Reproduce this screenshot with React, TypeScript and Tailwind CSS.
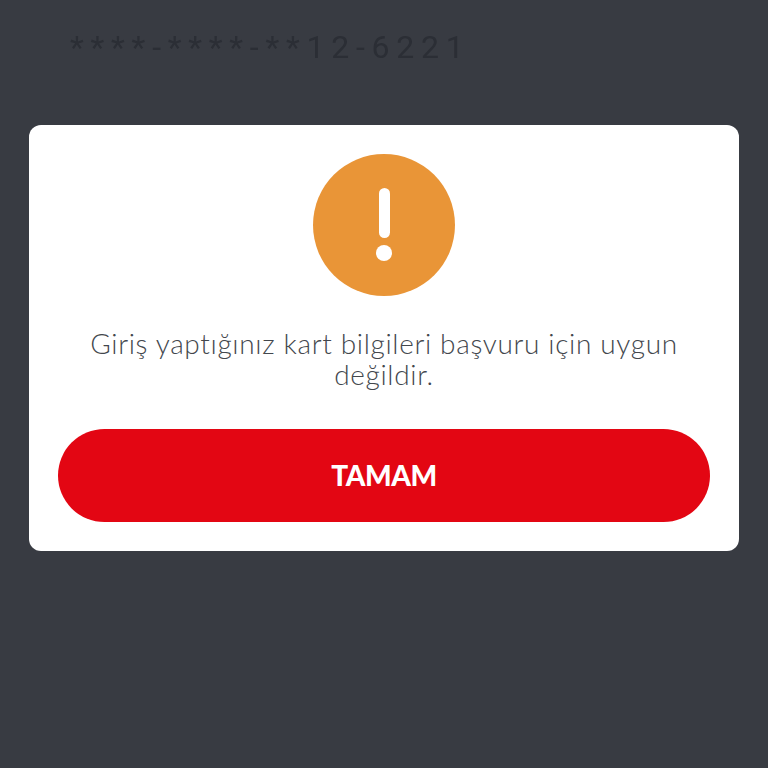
import React from 'react';

const App = () => {
    return (
        <div className="w-[768px] h-[768px] overflow-hidden bg-[#383b42] font-['Lato',sans-serif]">
            <div className="h-[125px] pl-[70px] pt-[28px]">
                <div className="text-[32px] leading-[38px] tracking-[6.75px] text-[#2b2e35] blur-[0.7px] font-['Roboto',sans-serif]">
                    ****-****-**12-6221
                </div>
            </div>
            <div className="mx-[29px] h-[426px] rounded-[12px] bg-white pt-[29px] px-[29px] flex flex-col items-center">
                <div className="w-[142px] h-[142px] rounded-full bg-[#e99537] flex flex-col items-center shrink-0">
                    <div className="w-[11px] h-[50px] mt-[34px] rounded-full bg-white"></div>
                    <div className="w-[16px] h-[16px] mt-[7px] rounded-full bg-white"></div>
                </div>
                <p className="mt-[32px] text-center text-[28px] leading-[31px] font-light tracking-[0.65px] text-[#43474d] w-[640px]">
                    Giriş yaptığınız kart bilgileri başvuru için uygun değildir.
                </p>
                <button className="mt-[39px] w-full h-[93px] shrink-0 rounded-full bg-[#e30613] text-white text-[28px] font-black tracking-[-0.4px] pb-[2px]">
                    TAMAM
                </button>
            </div>
        </div>
    );
};

export default App;
